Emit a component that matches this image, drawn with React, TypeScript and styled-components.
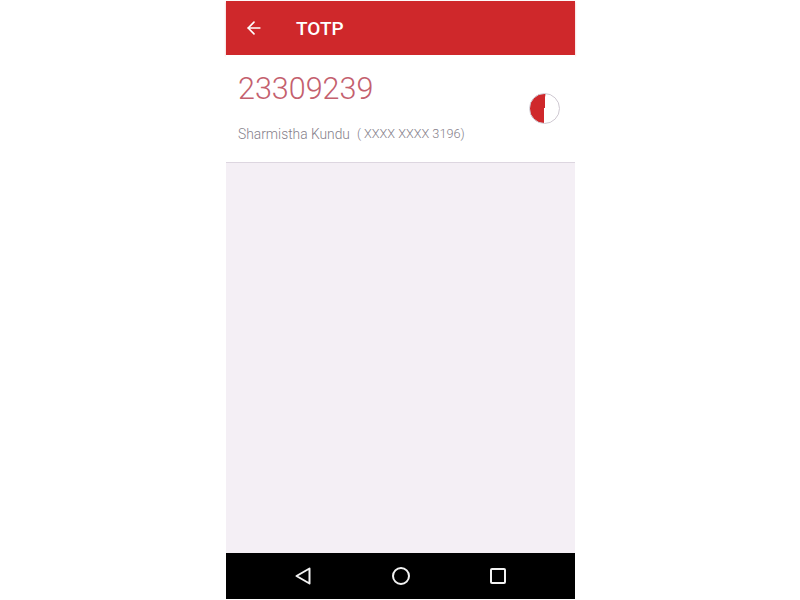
import styled, { createGlobalStyle } from "styled-components";
import { ArrowLeft } from "lucide-react";

const GlobalStyle = createGlobalStyle`
  html, body {
    margin: 0;
    background: #fff;
    font-family: Roboto, "Liberation Sans", sans-serif;
  }
`;

const Page = styled.div`
  display: flex;
  justify-content: center;
  height: 600px;
  padding: 1px 225px 1px 226px;
  box-sizing: border-box;
`;

const Phone = styled.div`
  flex: 1;
  display: flex;
  flex-direction: column;
  background: #f4eff5;
`;

const Header = styled.header`
  display: flex;
  align-items: center;
  height: 54px;
  flex-shrink: 0;
  padding-left: 18px;
  gap: 32px;
  background: #cf282b;
  color: #fff;
  box-shadow: 0 1px 2px rgba(208, 40, 43, 0.35);
`;

const Title = styled.h1`
  margin: 0;
  font-size: 19px;
  font-weight: 500;
`;

const Card = styled.section`
  display: flex;
  align-items: flex-start;
  justify-content: space-between;
  height: 108px;
  flex-shrink: 0;
  box-sizing: border-box;
  padding: 16px 15px 0 12px;
  background: #fff;
  border-bottom: 1px solid #ddd6e0;
`;

const Code = styled.div`
  font-size: 30.5px;
  font-weight: 300;
  line-height: 36px;
  color: #c4606e;
`;

const Owner = styled.div`
  display: flex;
  gap: 7px;
  margin-top: 19px;
  line-height: 16px;
  color: #85808a;
`;

const Name = styled.span`
  font-size: 13.8px;
  font-weight: 300;
`;

const Masked = styled.span`
  font-size: 12.7px;
  font-weight: 300;
`;

const Timer = styled.div`
  width: 31px;
  height: 31px;
  margin-top: 22px;
  box-sizing: border-box;
  border-radius: 50%;
  border: 1px solid #cfc9d2;
  background: conic-gradient(from 184deg, #cf282b 179deg, #fff 181deg);
`;

const Body = styled.main`
  flex: 1;
`;

const NavBar = styled.nav`
  display: flex;
  align-items: center;
  justify-content: center;
  gap: 63px;
  height: 46px;
  flex-shrink: 0;
  background: #000;
`;

const NavIcon = styled.svg`
  width: 34px;
  height: 22px;
  fill: none;
  stroke: #f2f2f2;
  stroke-width: 2;
`;

export default function App() {
  return (
    <>
      <GlobalStyle />
      <Page>
        <Phone>
          <Header>
            <ArrowLeft size={20} strokeWidth={2} />
            <Title>TOTP</Title>
          </Header>
          <Card>
            <div>
              <Code>23309239</Code>
              <Owner>
                <Name>Sharmistha Kundu</Name>
                <Masked>( XXXX XXXX 3196)</Masked>
              </Owner>
            </div>
            <Timer />
          </Card>
          <Body />
          <NavBar>
            <NavIcon viewBox="0 0 34 22">
              <path d="M22.5 3.5 L9.5 11 L22.5 18.5 Z" strokeLinejoin="round" />
            </NavIcon>
            <NavIcon viewBox="0 0 34 22">
              <circle cx="17" cy="11" r="8" />
            </NavIcon>
            <NavIcon viewBox="0 0 34 22">
              <rect x="10" y="4" width="14" height="14" rx="1" />
            </NavIcon>
          </NavBar>
        </Phone>
      </Page>
    </>
  );
}
